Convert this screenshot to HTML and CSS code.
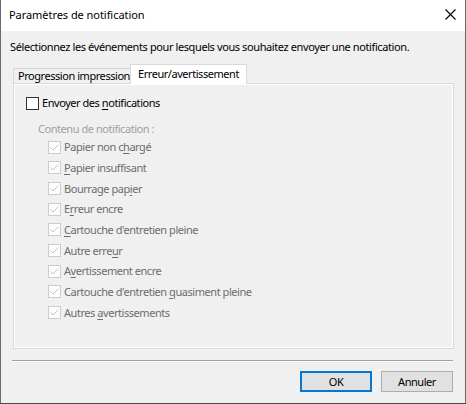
FILE: index.html
```html
<!DOCTYPE html>
<html lang="fr">
<head>
<meta charset="utf-8">
<title>Paramètres de notification</title>
<link rel="stylesheet" href="styles.css">
</head>
<body>
<div class="window">
  <div class="titlebar">
    <span class="title">Paramètres de notification</span>
    <svg class="close" width="11" height="11" viewBox="0 0 11 11"><path d="M0.5 0.5 L10.5 10.5 M10.5 0.5 L0.5 10.5" stroke="#000" stroke-width="1.1" fill="none"/></svg>
  </div>
  <div class="body">
    <p class="intro">Sélectionnez les événements pour lesquels vous souhaitez envoyer une notification.</p>
    <div class="tabs">
      <div class="tab">Progression impression</div>
      <div class="tab active">Erreur/avertissement</div>
    </div>
    <div class="panel">
      <label class="check main"><span class="box"></span><span>Envoyer des <u>n</u>otifications</span></label>
      <div class="group-label">Contenu de notification :</div>
      <ul class="items">
        <li class="check disabled"><span class="box"><svg viewBox="0 0 11 11" width="11" height="11"><path d="M1.5 5.5 L4 8 L9.5 2.5" /></svg></span><span>Papier non c<u>h</u>argé</span></li>
        <li class="check disabled"><span class="box"><svg viewBox="0 0 11 11" width="11" height="11"><path d="M1.5 5.5 L4 8 L9.5 2.5" /></svg></span><span><u>P</u>apier insuffisant</span></li>
        <li class="check disabled"><span class="box"><svg viewBox="0 0 11 11" width="11" height="11"><path d="M1.5 5.5 L4 8 L9.5 2.5" /></svg></span><span>Bourrage pap<u>i</u>er</span></li>
        <li class="check disabled"><span class="box"><svg viewBox="0 0 11 11" width="11" height="11"><path d="M1.5 5.5 L4 8 L9.5 2.5" /></svg></span><span>E<u>r</u>reur encre</span></li>
        <li class="check disabled"><span class="box"><svg viewBox="0 0 11 11" width="11" height="11"><path d="M1.5 5.5 L4 8 L9.5 2.5" /></svg></span><span><u>C</u>artouche d'entretien pleine</span></li>
        <li class="check disabled"><span class="box"><svg viewBox="0 0 11 11" width="11" height="11"><path d="M1.5 5.5 L4 8 L9.5 2.5" /></svg></span><span>Autre erre<u>u</u>r</span></li>
        <li class="check disabled"><span class="box"><svg viewBox="0 0 11 11" width="11" height="11"><path d="M1.5 5.5 L4 8 L9.5 2.5" /></svg></span><span>A<u>v</u>ertissement encre</span></li>
        <li class="check disabled"><span class="box"><svg viewBox="0 0 11 11" width="11" height="11"><path d="M1.5 5.5 L4 8 L9.5 2.5" /></svg></span><span>Cartouche d'entretien <u>q</u>uasiment pleine</span></li>
        <li class="check disabled"><span class="box"><svg viewBox="0 0 11 11" width="11" height="11"><path d="M1.5 5.5 L4 8 L9.5 2.5" /></svg></span><span>Autres <u>a</u>vertissements</span></li>
      </ul>
    </div>
    <div class="sep"></div>
    <div class="buttons">
      <button class="btn default">OK</button>
      <button class="btn">Annuler</button>
    </div>
  </div>
</div>
</body>
</html>
```
FILE: styles.css
```css
* { box-sizing: border-box; }
html, body { margin: 0; padding: 0; }
body {
  width: 466px;
  height: 404px;
  background: #4a4a4a;
  font-family: "Noto Sans", "Liberation Sans", sans-serif;
  font-size: 11px;
  letter-spacing: -0.45px;
  color: #000;
  overflow: hidden;
}
.window {
  width: 466px;
  height: 403px;
  border-left: 1px solid #6a6a6a;
  border-right: 1px solid #6a6a6a;
  display: flex;
  flex-direction: column;
  background: #f0f0f0;
}
.titlebar {
  height: 31px;
  background: #fff;
  display: flex;
  align-items: center;
  justify-content: space-between;
  padding: 0 9px 1px 8px;
}
.title { line-height: 16px; letter-spacing: -0.05px; }
.close { display: block; margin-bottom: 1px; }
.body {
  flex: 1;
  display: flex;
  flex-direction: column;
}
.intro {
  margin: 8px 0 0 9px;
  line-height: 16px;
  white-space: nowrap;
  letter-spacing: -0.4px;
}
.tabs {
  margin: 9px 0 0 12px;
  height: 19px;
  display: flex;
  align-items: flex-end;
}
.tab {
  height: 15px;
  line-height: 13px;
  padding: 0 4px;
  border: 1px solid #d9d9d9;
  border-bottom: none;
  background: #f0f0f0;
  width: 118px;
  white-space: nowrap;
  overflow: hidden;
}
.tab.active {
  height: 20px;
  margin-bottom: -1px;
  line-height: 17px;
  background: #fff;
  width: 117px;
  padding: 0 7px;
  margin-left: -1px;
  position: relative;
  z-index: 1;
}
.panel {
  margin-left: 12px;
  width: 441px;
  height: 266px;
  border: 1px solid #d9d9d9;
  box-shadow: inset 0 0 0 1px #fff;
  padding: 11px 12px 0;
}
.check {
  display: flex;
  align-items: center;
  gap: 3px;
  line-height: 16px;
  white-space: nowrap;
}
.box {
  width: 13px;
  height: 13px;
  flex: none;
  border: 1px solid #333;
  background: #fff;
  display: flex;
  align-items: center;
  justify-content: center;
}
.main { height: 16px; }
.group-label {
  margin: 10px 0 0 12px;
  line-height: 16px;
  color: #a0a0a0;
}
.items {
  list-style: none;
  margin: 0 0 0 22px;
  padding: 0;
}
.items .check { height: 20.66px; }
.disabled { color: #6d6d6d; }
.disabled .box {
  border-color: #cccccc;
  background: #fcfcfc;
}
.disabled svg path {
  fill: none;
  stroke: #c4c4c4;
  stroke-width: 1;
}
u { text-decoration-thickness: 1px; text-underline-offset: 2px; }
.sep {
  margin: 11px 0 0 11px;
  width: 441px;
  height: 2px;
  border-top: 1px solid #a0a0a0;
  border-bottom: 1px solid #fff;
}
.buttons {
  margin: 9px 12px 0 0;
  display: flex;
  justify-content: flex-end;
  gap: 9px;
}
.btn {
  width: 72px;
  height: 21px;
  font: inherit;
  letter-spacing: inherit;
  color: #000;
  background: #e1e1e1;
  border: 1px solid #adadad;
  padding: 0;
  line-height: 17px;
}
.btn.default {
  border: 2px solid #0078d7;
}
```
